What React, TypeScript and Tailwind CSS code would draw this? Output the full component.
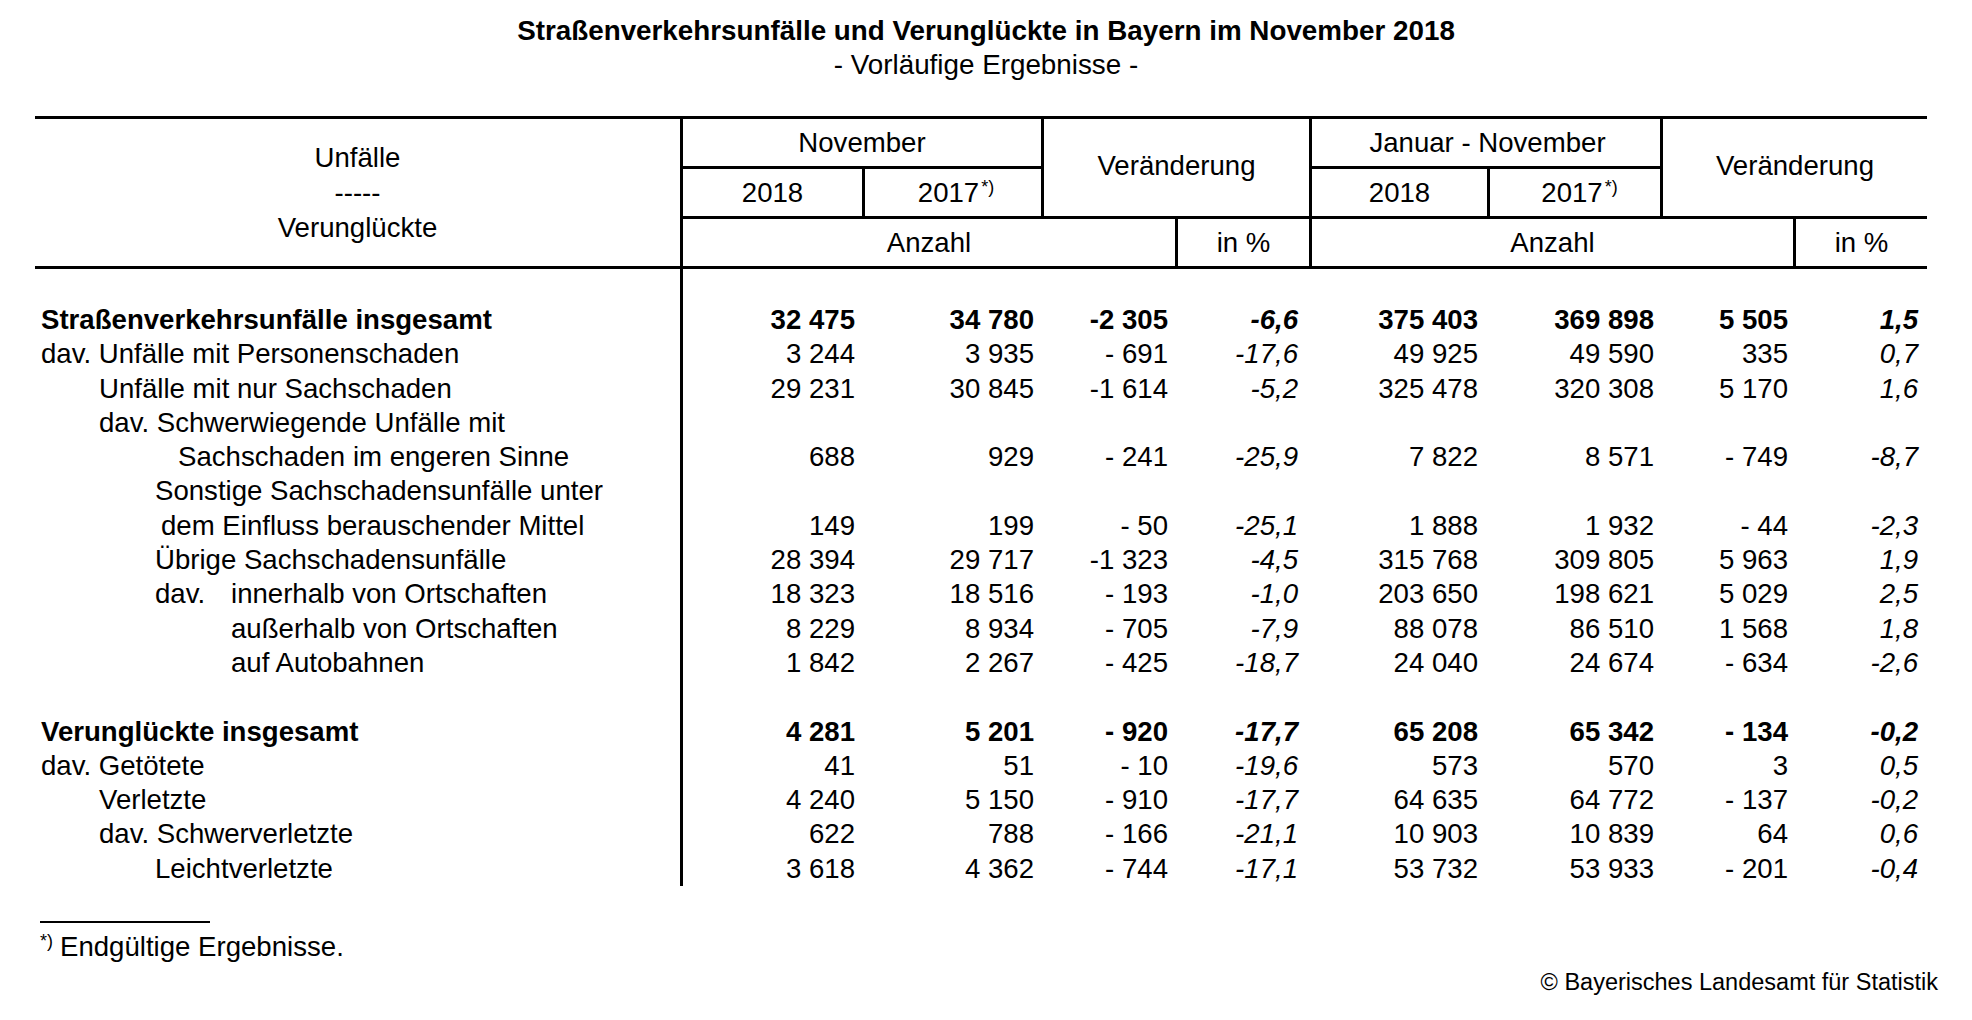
import type { ReactNode } from "react";

type Row = {
  pad: string;
  label: ReactNode;
  bold?: boolean;
  v?: string[];
};

const rows: Row[] = [
  { pad: "pl-[6px]", label: "Straßenverkehrsunfälle insgesamt", bold: true, v: ["32 475", "34 780", "-2 305", "-6,6", "375 403", "369 898", "5 505", "1,5"] },
  { pad: "pl-[6px]", label: "dav. Unfälle mit Personenschaden", v: ["3 244", "3 935", "- 691", "-17,6", "49 925", "49 590", "335", "0,7"] },
  { pad: "pl-[64px]", label: "Unfälle mit nur Sachschaden", v: ["29 231", "30 845", "-1 614", "-5,2", "325 478", "320 308", "5 170", "1,6"] },
  { pad: "pl-[64px]", label: "dav. Schwerwiegende Unfälle mit" },
  { pad: "pl-[143px]", label: "Sachschaden im engeren Sinne", v: ["688", "929", "- 241", "-25,9", "7 822", "8 571", "- 749", "-8,7"] },
  { pad: "pl-[120px]", label: "Sonstige Sachschadensunfälle unter" },
  { pad: "pl-[126px]", label: "dem Einfluss berauschender Mittel", v: ["149", "199", "- 50", "-25,1", "1 888", "1 932", "- 44", "-2,3"] },
  { pad: "pl-[120px]", label: "Übrige Sachschadensunfälle", v: ["28 394", "29 717", "-1 323", "-4,5", "315 768", "309 805", "5 963", "1,9"] },
  {
    pad: "pl-[120px]",
    label: (
      <>
        <span className="inline-block w-[76px]">dav.</span>innerhalb von Ortschaften
      </>
    ),
    v: ["18 323", "18 516", "- 193", "-1,0", "203 650", "198 621", "5 029", "2,5"],
  },
  { pad: "pl-[196px]", label: "außerhalb von Ortschaften", v: ["8 229", "8 934", "- 705", "-7,9", "88 078", "86 510", "1 568", "1,8"] },
  { pad: "pl-[196px]", label: "auf Autobahnen", v: ["1 842", "2 267", "- 425", "-18,7", "24 040", "24 674", "- 634", "-2,6"] },
  { pad: "pl-[6px]", label: "" },
  { pad: "pl-[6px]", label: "Verunglückte insgesamt", bold: true, v: ["4 281", "5 201", "- 920", "-17,7", "65 208", "65 342", "- 134", "-0,2"] },
  { pad: "pl-[6px]", label: "dav. Getötete", v: ["41", "51", "- 10", "-19,6", "573", "570", "3", "0,5"] },
  { pad: "pl-[64px]", label: "Verletzte", v: ["4 240", "5 150", "- 910", "-17,7", "64 635", "64 772", "- 137", "-0,2"] },
  { pad: "pl-[64px]", label: "dav. Schwerverletzte", v: ["622", "788", "- 166", "-21,1", "10 903", "10 839", "64", "0,6"] },
  { pad: "pl-[120px]", label: "Leichtverletzte", v: ["3 618", "4 362", "- 744", "-17,1", "53 732", "53 933", "- 201", "-0,4"] },
];

const cellPad = ["pr-[7px]", "pr-[7px]", "pr-[7px]", "pr-[11px] italic", "pr-[6px]", "pr-[6px]", "pr-[5px]", "pr-[9px] italic"];

function Sup() {
  return <sup className="ml-[2px] text-[18px]">*)</sup>;
}

function PeriodHeader({ title }: { title: string }) {
  return (
    <>
      <div className="col-span-2 flex items-center justify-center border-b-[3px] border-black">{title}</div>
      <div className="flex items-center justify-center border-b-[3px] border-black">2018</div>
      <div className="flex items-center justify-center border-b-[3px] border-l-[3px] border-black">
        <span className="pl-[6px]">
          2017
          <Sup />
        </span>
      </div>
    </>
  );
}

export default function App() {
  return (
    <div className="h-[1020px] w-[1972px] bg-white font-['Liberation_Sans',Arial,sans-serif] text-[27.6px] text-black">
      <div className="pt-[14px] text-center text-[27.8px] leading-[34px]">
        <h1 className="font-bold">Straßenverkehrsunfälle und Verunglückte in Bayern im November 2018</h1>
        <p>- Vorläufige Ergebnisse -</p>
      </div>

      <div className="ml-[35px] mt-[34px] w-[1892px]">
        {/* header */}
        <div className="grid grid-cols-[648px_1244px] border-y-[3px] border-black">
          <div className="flex flex-col items-center justify-center border-r-[3px] border-black leading-[35px]">
            <span>Unfälle</span>
            <span>-----</span>
            <span>Verunglückte</span>
          </div>
          <div className="grid grid-cols-[179px_179px_134px_134px_175px_176px_133px_134px] grid-rows-[50px_50px_47px]">
            <div className="col-start-1 col-end-3 row-start-1 row-end-3 grid grid-cols-2 grid-rows-2">
              <PeriodHeader title="November" />
            </div>
            <div className="col-start-3 col-end-5 row-start-1 row-end-3 flex items-center justify-center border-b-[3px] border-l-[3px] border-black pb-[4px]">
              Veränderung
            </div>
            <div className="col-start-5 col-end-7 row-start-1 row-end-3 grid grid-cols-[175px_176px] grid-rows-2 border-l-[3px] border-black">
              <PeriodHeader title="Januar - November" />
            </div>
            <div className="col-start-7 col-end-9 row-start-1 row-end-3 flex items-center justify-center border-b-[3px] border-l-[3px] border-black pb-[4px]">
              Veränderung
            </div>
            <div className="col-start-1 col-end-4 flex items-center justify-center">Anzahl</div>
            <div className="flex items-center justify-center border-l-[3px] border-black">in %</div>
            <div className="col-start-5 col-end-8 flex items-center justify-center border-l-[3px] border-black">Anzahl</div>
            <div className="flex items-center justify-center border-l-[3px] border-black">in %</div>
          </div>
        </div>

        {/* body */}
        <div className="grid grid-cols-[648px_179px_179px_134px_134px_175px_176px_133px_134px]">
          <div className="h-[34px] border-r-[3px] border-black" />
          <div className="col-span-8" />
          {rows.map((r, i) => (
            <div key={i} className={`col-span-9 grid h-[34.3px] grid-cols-subgrid leading-[34.3px] ${r.bold ? "font-bold" : ""}`}>
              <div className={`whitespace-nowrap border-r-[3px] border-black ${r.pad}`}>{r.label}</div>
              {(r.v ?? ["", "", "", "", "", "", "", ""]).map((n, j) => (
                <div key={j} className={`text-right whitespace-nowrap ${cellPad[j]}`}>
                  {n}
                </div>
              ))}
            </div>
          ))}
        </div>
      </div>

      {/* footnote */}
      <div className="ml-[40px] mt-[35px] h-[2px] w-[170px] bg-black" />
      <div className="ml-[40px] mt-[9px] leading-[30px]">
        <sup className="mr-[7px] text-[18px]">*)</sup>Endgültige Ergebnisse.
      </div>
      <div className="mt-[5px] pr-[34px] text-right text-[23.5px] leading-[30px]">© Bayerisches Landesamt für Statistik</div>
    </div>
  );
}
